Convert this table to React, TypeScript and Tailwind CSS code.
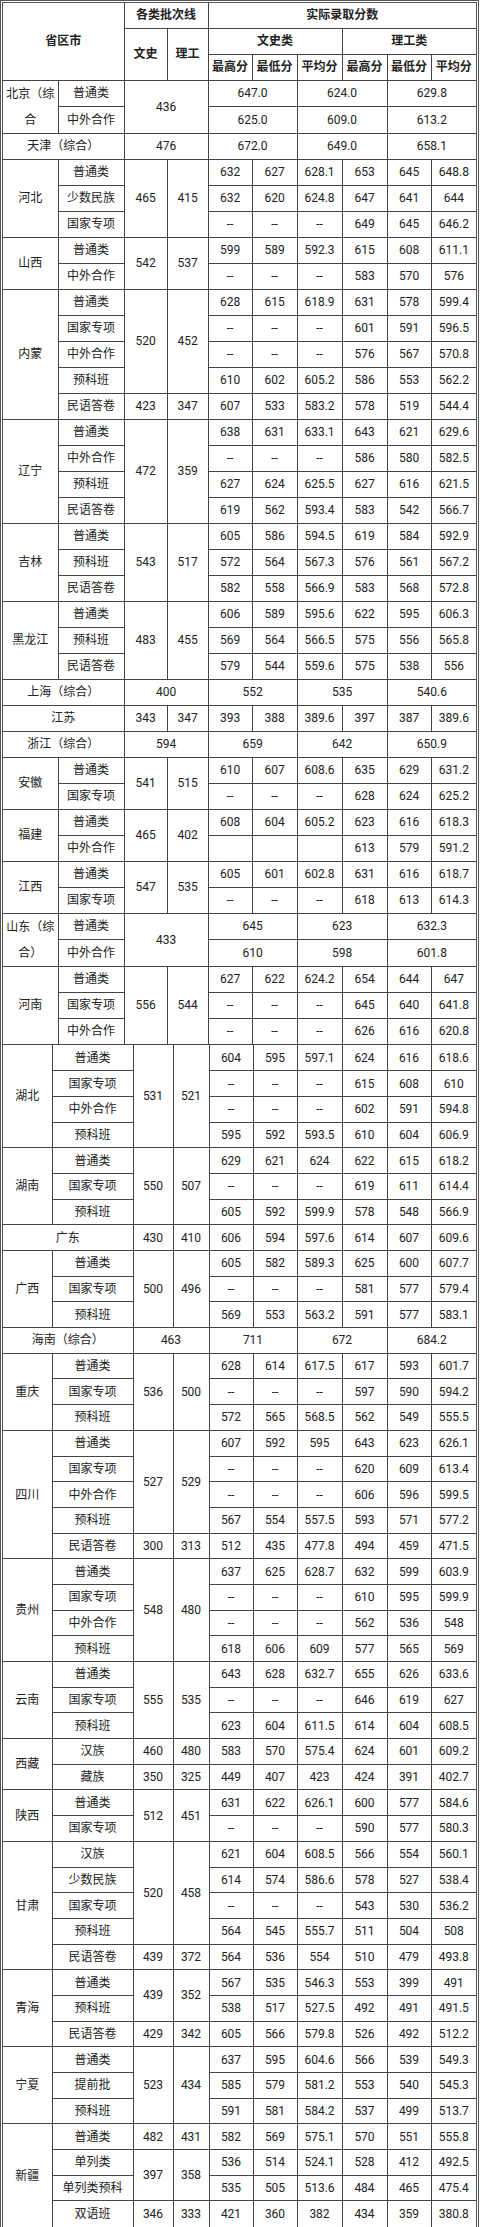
import React from 'react';

type Cell = { t: string; c?: number; r?: number; cls?: string };
type Item = string | Cell;

const c = (t: string, cs = 1, rs = 1, cls = ''): Cell => ({ t, c: cs, r: rs, cls });

// a string with spaces becomes several cells, one per token
const R = (...items: Item[]): Cell[] =>
  items.flatMap((it) =>
    typeof it === 'string' ? it.split(' ').map((t) => ({ t })) : [it],
  );

const wrap = 'whitespace-pre-line leading-[26px]';
const bold = 'font-bold leading-none';

const topHeader: Cell[][] = [
  [c('省区市', 2, 3, bold), c('各类批次线', 2, 1, bold), c('实际录取分数', 6, 1, bold)],
  [c('文史', 1, 2, bold), c('理工', 1, 2, bold), c('文史类', 3, 1, bold), c('理工类', 3, 1, bold)],
  ['最高分', '最低分', '平均分', '最高分', '最低分', '平均分'].map((t) => c(t, 1, 1, bold)),
];

const topRows: Cell[][] = [
  R(c('北京（综\n合', 1, 2, wrap), '普通类', c('436', 2, 2), c('647.0', 2), c('624.0', 2), c('629.8', 2)),
  R('中外合作', c('625.0', 2), c('609.0', 2), c('613.2', 2)),
  R(c('天津（综合）', 2), c('476', 2), c('672.0', 2), c('649.0', 2), c('658.1', 2)),
  R(c('河北', 1, 3), '普通类', c('465', 1, 3), c('415', 1, 3), '632 627 628.1 653 645 648.8'),
  R('少数民族', '632 620 624.8 647 641 644'),
  R('国家专项', '-- -- -- 649 645 646.2'),
  R(c('山西', 1, 2), '普通类', c('542', 1, 2), c('537', 1, 2), '599 589 592.3 615 608 611.1'),
  R('中外合作', '-- -- -- 583 570 576'),
  R(c('内蒙', 1, 5), '普通类', c('520', 1, 4), c('452', 1, 4), '628 615 618.9 631 578 599.4'),
  R('国家专项', '-- -- -- 601 591 596.5'),
  R('中外合作', '-- -- -- 576 567 570.8'),
  R('预科班', '610 602 605.2 586 553 562.2'),
  R('民语答卷', '423 347 607 533 583.2 578 519 544.4'),
  R(c('辽宁', 1, 4), '普通类', c('472', 1, 4), c('359', 1, 4), '638 631 633.1 643 621 629.6'),
  R('中外合作', '-- -- -- 586 580 582.5'),
  R('预科班', '627 624 625.5 627 616 621.5'),
  R('民语答卷', '619 562 593.4 583 542 566.7'),
  R(c('吉林', 1, 3), '普通类', c('543', 1, 3), c('517', 1, 3), '605 586 594.5 619 584 592.9'),
  R('预科班', '572 564 567.3 576 561 567.2'),
  R('民语答卷', '582 558 566.9 583 568 572.8'),
  R(c('黑龙江', 1, 3), '普通类', c('483', 1, 3), c('455', 1, 3), '606 589 595.6 622 595 606.3'),
  R('预科班', '569 564 566.5 575 556 565.8'),
  R('民语答卷', '579 544 559.6 575 538 556'),
  R(c('上海（综合）', 2), c('400', 2), c('552', 2), c('535', 2), c('540.6', 2)),
  R(c('江苏', 2), '343 347 393 388 389.6 397 387 389.6'),
  R(c('浙江（综合）', 2), c('594', 2), c('659', 2), c('642', 2), c('650.9', 2)),
  R(c('安徽', 1, 2), '普通类', c('541', 1, 2), c('515', 1, 2), '610 607 608.6 635 629 631.2'),
  R('国家专项', '-- -- -- 628 624 625.2'),
  R(c('福建', 1, 2), '普通类', c('465', 1, 2), c('402', 1, 2), '608 604 605.2 623 616 618.3'),
  R('中外合作', c(''), c(''), c(''), '613 579 591.2'),
  R(c('江西', 1, 2), '普通类', c('547', 1, 2), c('535', 1, 2), '605 601 602.8 631 616 618.7'),
  R('国家专项', '-- -- -- 618 613 614.3'),
  R(c('山东（综\n合）', 1, 2, wrap), '普通类', c('433', 2, 2), c('645', 2), c('623', 2), c('632.3', 2)),
  R('中外合作', c('610', 2), c('598', 2), c('601.8', 2)),
  R(c('河南', 1, 3), '普通类', c('556', 1, 3), c('544', 1, 3), '627 622 624.2 654 644 647'),
  R('国家专项', '-- -- -- 645 640 641.8'),
  R('中外合作', '-- -- -- 626 616 620.8'),
];

const bottomRows: Cell[][] = [
  R(c('湖北', 1, 4), '普通类', c('531', 1, 4), c('521', 1, 4), '604 595 597.1 624 616 618.6'),
  R('国家专项', '-- -- -- 615 608 610'),
  R('中外合作', '-- -- -- 602 591 594.8'),
  R('预科班', '595 592 593.5 610 604 606.9'),
  R(c('湖南', 1, 3), '普通类', c('550', 1, 3), c('507', 1, 3), '629 621 624 622 615 618.2'),
  R('国家专项', '-- -- -- 619 611 614.4'),
  R('预科班', '605 592 599.9 578 548 566.9'),
  R(c('广东', 2), '430 410 606 594 597.6 614 607 609.6'),
  R(c('广西', 1, 3), '普通类', c('500', 1, 3), c('496', 1, 3), '605 582 589.3 625 600 607.7'),
  R('国家专项', '-- -- -- 581 577 579.4'),
  R('预科班', '569 553 563.2 591 577 583.1'),
  R(c('海南（综合）', 2), c('463', 2), c('711', 2), c('672', 2), c('684.2', 2)),
  R(c('重庆', 1, 3), '普通类', c('536', 1, 3), c('500', 1, 3), '628 614 617.5 617 593 601.7'),
  R('国家专项', '-- -- -- 597 590 594.2'),
  R('预科班', '572 565 568.5 562 549 555.5'),
  R(c('四川', 1, 5), '普通类', c('527', 1, 4), c('529', 1, 4), '607 592 595 643 623 626.1'),
  R('国家专项', '-- -- -- 620 609 613.4'),
  R('中外合作', '-- -- -- 606 596 599.5'),
  R('预科班', '567 554 557.5 593 571 577.2'),
  R('民语答卷', '300 313 512 435 477.8 494 459 471.5'),
  R(c('贵州', 1, 4), '普通类', c('548', 1, 4), c('480', 1, 4), '637 625 628.7 632 599 603.9'),
  R('国家专项', '-- -- -- 610 595 599.9'),
  R('中外合作', '-- -- -- 562 536 548'),
  R('预科班', '618 606 609 577 565 569'),
  R(c('云南', 1, 3), '普通类', c('555', 1, 3), c('535', 1, 3), '643 628 632.7 655 626 633.6'),
  R('国家专项', '-- -- -- 646 619 627'),
  R('预科班', '623 604 611.5 614 604 608.5'),
  R(c('西藏', 1, 2), '汉族', '460 480 583 570 575.4 624 601 609.2'),
  R('藏族', '350 325 449 407 423 424 391 402.7'),
  R(c('陕西', 1, 2), '普通类', c('512', 1, 2), c('451', 1, 2), '631 622 626.1 600 577 584.6'),
  R('国家专项', '-- -- -- 590 577 580.3'),
  R(c('甘肃', 1, 5), '汉族', c('520', 1, 4), c('458', 1, 4), '621 604 608.5 566 554 560.1'),
  R('少数民族', '614 574 586.6 578 527 538.4'),
  R('国家专项', '-- -- -- 543 530 536.2'),
  R('预科班', '564 545 555.7 511 504 508'),
  R('民语答卷', '439 372 564 536 554 510 479 493.8'),
  R(c('青海', 1, 3), '普通类', c('439', 1, 2), c('352', 1, 2), '567 535 546.3 553 399 491'),
  R('预科班', '538 517 527.5 492 491 491.5'),
  R('民语答卷', '429 342 605 566 579.8 526 492 512.2'),
  R(c('宁夏', 1, 3), '普通类', c('523', 1, 3), c('434', 1, 3), '637 595 604.6 566 539 549.3'),
  R('提前批', '585 579 581.2 553 540 545.3'),
  R('预科班', '591 581 584.2 537 499 513.7'),
  R(c('新疆', 1, 4), '普通类', '482 431 582 569 575.1 570 551 555.8'),
  R('单列类', c('397', 1, 2), c('358', 1, 2), '536 514 524.1 528 412 492.5'),
  R('单列类预科', '535 505 513.6 484 465 475.4'),
  R('双语班', '346 333 421 360 382 434 359 380.8'),
];

const topCols = [55, 66, 43, 41, 44, 45, 45, 45, 44, 45];
const bottomCols = [49, 81, 40, 36, 44, 44, 45, 45, 44, 45];

const Row = ({ cells, h }: { cells: Cell[]; h: string }) => (
  <tr className={h}>
    {cells.map((cell, i) => (
      <td
        key={i}
        colSpan={cell.c ?? 1}
        rowSpan={cell.r ?? 1}
        className={`border border-[#444] p-0 text-center align-middle ${cell.cls || 'leading-none'}`}
      >
        {cell.t}
      </td>
    ))}
  </tr>
);

const ScoreTable = ({
  cols,
  header,
  rows,
  rowH,
}: {
  cols: number[];
  header?: Cell[][];
  rows: Cell[][];
  rowH: string;
}) => (
  <table className="w-full table-fixed border-collapse border-hidden">
    <colgroup>
      {cols.map((w, i) => (
        <col key={i} style={{ width: w }} />
      ))}
    </colgroup>
    <tbody>
      {header?.map((cells, i) => (
        <Row key={`h${i}`} cells={cells} h={i === 0 ? 'h-[25px]' : 'h-[26px]'} />
      ))}
      {rows.map((cells, i) => (
        <Row key={i} cells={cells} h={rowH} />
      ))}
    </tbody>
  </table>
);

export default function App() {
  return (
    <div
      className="min-h-[2227px] w-[480px] bg-white text-[12px] text-[#222]"
      style={{ fontFamily: 'Roboto, "Noto Sans CJK SC", sans-serif' }}
    >
      <div className="w-[479px] border-[3px] border-double border-[#555]">
        <ScoreTable cols={topCols} header={topHeader} rows={topRows} rowH="h-[26px]" />
        <div className="h-px bg-[#444]" />
        <ScoreTable cols={bottomCols} rows={bottomRows} rowH="h-[25.7px]" />
      </div>
    </div>
  );
}
